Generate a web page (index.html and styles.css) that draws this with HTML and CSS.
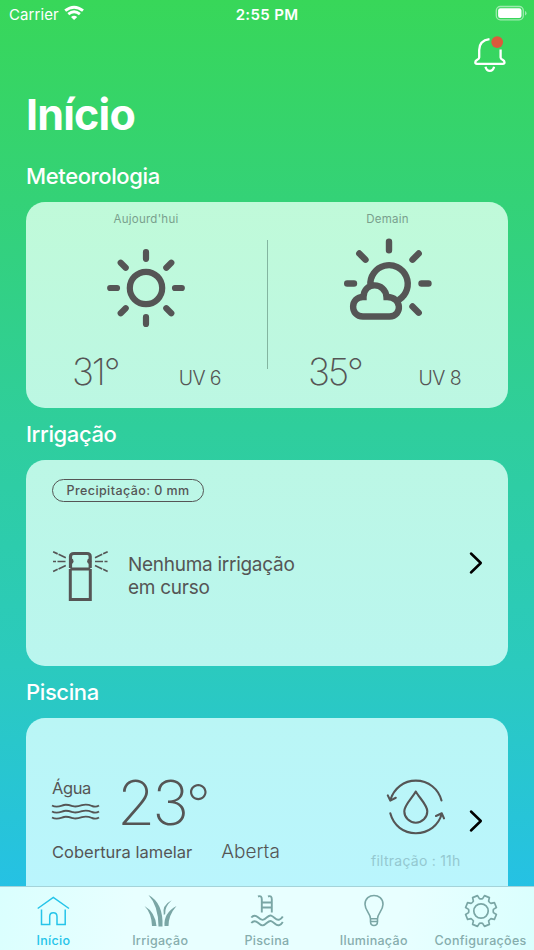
FILE: index.html
```html
<!DOCTYPE html>
<html lang="pt">
<head>
<meta charset="utf-8">
<meta name="viewport" content="width=device-width, initial-scale=1">
<title>Início</title>
<link rel="stylesheet" href="styles.css">
</head>
<body>
<header class="status">
  <div class="carrier"><span>Carrier</span>
    <svg width="20" height="15" viewBox="64 5 20 15" fill="none" stroke="#fff" stroke-width="2.900"><path d="M65.200 10.700Q74.100 3.600 83 10.700M68.300 14.100Q74.100 9.500 79.900 14.100"/><path d="M71 17Q74.100 14.400 77.200 17L74.100 20Z" fill="#fff" stroke="none"/></svg>
  </div>
  <time>2:55 PM</time>
  <svg class="battery" width="32" height="16" viewBox="495 5 32 16"><rect x="496.300" y="6.500" width="27" height="13.300" rx="4" fill="none" stroke="#fff" stroke-opacity=".5" stroke-width="1.300"/><rect x="498.100" y="8.300" width="23.400" height="9.700" rx="2.200" fill="#fff"/><path d="M525 11v4.500q1.500-.6 1.500-2.250T525 11" fill="#fff" fill-opacity=".5"/></svg>
</header>
<div class="toolbar">
  <svg width="36" height="38" viewBox="472 35 36 38" fill="none" stroke="#fff" stroke-width="2.300" stroke-linecap="round" stroke-linejoin="round"><path d="M489.500 39.200C482.500 40.200 479.200 44.500 479.200 50V57.500C479.200 60 475.300 59.700 475.300 62.200Q475.300 63.800 477 63.800H502.800Q504.500 63.800 504.500 62.200C504.500 59.700 500.600 60 500.600 57.500V49.500" stroke-linecap="butt"/><path d="M485.500 66.800Q486.500 70.900 489.800 70.900T494.100 66.800" stroke-linecap="butt"/><circle cx="497.200" cy="42.100" r="5.900" fill="#dc5a3c" stroke="none"/></svg>
</div>
<main>
  <h1>Início</h1>
  <section>
    <h2>Meteorologia</h2>
    <div class="card weather">
      <article class="day">
        <p class="when">Aujourd'hui</p>
        <svg class="sky" width="100" height="96" viewBox="96 236 100 96" fill="none" stroke="#555" stroke-width="6.200" stroke-linecap="round"><circle cx="146" cy="288" r="16.200"/><path d="M146 252v6.800M146 317.200v6.800M110.200 288h6.800M175 288h6.800M120.700 262.700l5 5M171.300 262.700l-5 5M120.700 313.300l5-5M171.300 313.300l-5-5"/></svg>
        <div class="readings"><span class="temp">31°</span><span class="uv">UV 6</span></div>
      </article>
      <div class="divider"></div>
      <article class="day tomorrow">
        <p class="when">Demain</p>
        <svg class="sky" width="100" height="96" viewBox="338 236 100 96" fill="none" stroke="#555" stroke-width="6.400" stroke-linecap="round"><path d="M389 241.800v8.500M359.300 253.500l6.200 6.200M418.700 253.500l-6.200 6.200M347.200 283.500h6.800M421.500 283.500h7M412.500 306.500l6.200 6.200"/><path stroke-linecap="butt" d="M370.400 285.500A18.700 18.700 0 1 1 399 299.700M363 316.500C349.500 316.500 350 296.500 363.500 297C363.500 281.500 385.500 281.500 386.500 297C402.500 296.500 402.500 316.500 389.500 316.500Z"/></svg>
        <div class="readings"><span class="temp">35°</span><span class="uv">UV 8</span></div>
      </article>
    </div>
  </section>
  <section>
    <h2>Irrigação</h2>
    <div class="card irrigation">
      <span class="pill">Precipitação: 0 mm</span>
      <div class="irrigation-row">
        <svg width="58" height="54" viewBox="51 549 58 54" fill="none" stroke="#555"><path stroke-width="3" d="M70.300 569V599.500H90.300V569M70.300 569H90.300"/><path stroke-width="3.200" d="M70.500 568V556.500Q70.500 553.500 74 553.500H87Q90.200 553.500 90.200 556.500V568"/><ellipse cx="71.500" cy="561.300" rx="2" ry="2.700" fill="#555" stroke="none"/><ellipse cx="89.200" cy="561.300" rx="2" ry="2.700" fill="#555" stroke="none"/><path stroke-width="1.700" stroke-dasharray="8 1 5 1" d="M65.800 557.700L53 551.700M65.800 565.500L53 571.500M95 557.700L107.700 551.700M95 565.500L107.700 571.500"/><path stroke-width="1.700" stroke-dasharray="8 1.500 3 1" d="M65.500 561.500H52M95 561.500H108.500"/></svg>
        <p>Nenhuma irrigação<br>em curso</p>
        <svg class="chevron" width="15" height="24" viewBox="469 551 15 24"><path d="M471 553.500l9.800 9.500-9.800 9.500"/></svg>
      </div>
    </div>
  </section>
  <section>
    <h2>Piscina</h2>
    <div class="card pool">
      <div class="pool-info">
        <div class="water-row">
          <div class="water"><span>Água</span>
            <svg width="49" height="19" viewBox="51 803 49 19" fill="none" stroke="#555" stroke-width="1.900"><path id="wave" d="M52 805.500C57 808.300 61 805.700 64 805S70 805.300 73 806.200 79 806.200 82 805.200 88 804.300 92 806Q96 807.500 99 805.500"/><use href="#wave" y="6"/><use href="#wave" y="12"/></svg>
          </div>
          <span class="pool-temp">23<span class="degree">°</span></span>
        </div>
        <div class="cover-row"><span class="cover">Cobertura lamelar</span><span class="state">Aberta</span></div>
      </div>
      <div class="filter">
        <svg width="62" height="60" viewBox="385 777 62 60" fill="none" stroke="#555" stroke-width="2.100" stroke-linecap="round" stroke-linejoin="round"><path d="M390.300 800C394 788 404 780.600 415.800 780.600C428.500 780.600 438.500 789 441.500 800.500M387.800 795.400L390.300 800.600 395.800 797.800M390.300 813.300C393.500 825.500 403.500 833.200 415.800 833.200C428.500 833.200 438.500 825.500 441.800 813.800M436 816L441.800 813.300 444 818.400M415.800 791.500C412.500 797.500 404.300 805 404.300 811.200A11.500 11.500 0 0 0 427.300 811.200C427.300 805 419 797.500 415.800 791.500Z"/></svg>
        <p>filtração : 11h</p>
      </div>
      <svg class="chevron" width="15" height="24" viewBox="469 551 15 24"><path d="M471 553.500l9.800 9.500-9.800 9.500"/></svg>
    </div>
  </section>
</main>
<nav class="tabs">
  <a class="tab active"><svg width="36" height="34" viewBox="35 894 36 34" stroke-width="1.500"><path d="M37.700 908.500L53.300 897.300 69 908.500M41.500 909.500V924.400H49.700V916.500Q49.700 912.800 53.300 912.800T57 916.500V924.400H65.200V909.500"/></svg><span>Início</span></a>
  <a class="tab"><svg width="36" height="34" viewBox="142 894 36 34"><path fill="#7aa6a5" stroke="none" d="M144.500 906Q155 912 156.500 926H152Q151.500 913 144.500 906ZM148.500 895Q163.500 903 162.500 926.500H158.500Q158.500 906 148.500 895ZM171.700 900.300Q164.500 907 165.200 914L163.800 915Q161.500 905.500 171.700 900.300ZM176.500 906Q168.500 915 168.500 926H164.500Q163.500 913 176.500 906Z"/></svg><span>Irrigação</span></a>
  <a class="tab"><svg width="36" height="34" viewBox="248.500 894 36 34" stroke-width="1.900"><path d="M257.500 896.500Q261.300 895 261.300 899.500V912.500M267.500 896.500Q271.300 895 271.300 899.500V912.500M261.300 902.500H271.300M261.300 907.500H271.300"/><path d="M250.800 917.500Q253.800 914 257.500 917.300C261.500 921 263 920.500 266.500 917.300S271.500 915.500 274.500 918.300 280.500 919.500 282.300 916.500M250.800 923Q253.800 919.500 257.500 922.800C261.500 926.500 263 926 266.500 922.800S271.500 921 274.500 923.800 280.500 925 282.300 922"/></svg><span>Piscina</span></a>
  <a class="tab"><svg width="36" height="34" viewBox="355 894 36 34" stroke-width="1.600"><path d="M369.500 918.800C369.500 913.500 364 910.500 364 904.300C364 892.500 382 892.500 382 904.300C382 910.500 376.500 913.500 376.500 918.800ZM369.500 919V921.500Q369.500 925.500 373 925.500T376.500 921.500V919M370 921.500H376"/></svg><span>Iluminação</span></a>
  <a class="tab"><svg width="36" height="34" viewBox="-18 -17 36 34" stroke-width="1.700"><path stroke-linejoin="round" d="M12.400 1.600L15.400 3.500 13.400 8.400 9.900 7.600Q8.500 8.500 7.600 9.900L8.400 13.400 3.500 15.400 1.600 12.400Q0 12 -1.600 12.400L-3.500 15.400 -8.400 13.400 -7.600 9.900Q-8.500 8.500 -9.900 7.600L-13.400 8.400 -15.400 3.500 -12.400 1.600Q-12 0 -12.400 -1.600L-15.400 -3.500 -13.400 -8.400 -9.900 -7.600Q-8.500 -8.500 -7.600 -9.900L-8.400 -13.400 -3.500 -15.400 -1.600 -12.400Q0 -12 1.600 -12.400L3.500 -15.400 8.400 -13.400 7.600 -9.900Q8.500 -8.500 9.900 -7.600L13.400 -8.400 15.400 -3.500 12.400 -1.600Q12 0 12.400 1.600Z"/><circle r="7.200"/></svg><span>Configurações</span></a>
</nav>
</body>
</html>
```
FILE: styles.css
```css
* { box-sizing: border-box; }
body {
  margin: 0;
  height: 950px;
  overflow: hidden;
  font-family: Inter, "Liberation Sans", sans-serif;
  color: #555;
  background: linear-gradient(#38d759 0, #34d277 21%, #2fce9c 45%, #2bcabe 70%, #25c1e5 94%);
}
h1, h2, p { margin: 0; }
svg { display: block; flex: none; }
span, p, h1, h2, time { white-space: nowrap; }
.status {
  height: 28px;
  padding: 0 7px 0 9px;
  display: grid;
  grid-template-columns: 1fr auto 1fr;
  align-items: center;
  color: #fff;
  font-size: 15px;
}
.carrier { display: flex; align-items: center; gap: 5px; letter-spacing: .1px; }
.carrier svg { margin-top: -3px; }
.status time { margin-right: 2px; font-weight: 600; letter-spacing: .35px; }
.battery { justify-self: end; margin-top: -2px; }
.toolbar { height: 50px; padding: 7px 26px 0; display: flex; justify-content: flex-end; }
main { padding: 0 26px; }
h1 { height: 72px; line-height: 72px; font-size: 43px; font-weight: 700; letter-spacing: -.8px; color: #fff; }
h2 { height: 52px; line-height: 52px; font-size: 22px; font-weight: 550; letter-spacing: -.38px; color: #fff; }
.card { height: 206px; border-radius: 19px; overflow: hidden; }
.weather { display: flex; background: linear-gradient(#c0fad9, #bcf7e3); }
.day { width: 240px; display: flex; flex-direction: column; align-items: center; }
.tomorrow { width: 241px; }
.when { height: 34px; line-height: 34px; font-size: 11.500px; letter-spacing: .25px; color: #79a08d; }
.divider { width: 1px; height: 129px; margin: 38px -1px 0 1px; background: #83b5a0; }
.readings { align-self: stretch; display: flex; align-items: baseline; padding: 10px 45px 0 46px; justify-content: space-between; }
.tomorrow .readings { padding-left: 41px; padding-right: 47px; }
.temp { font-size: 37px; font-weight: 160; line-height: 59px; letter-spacing: -2.150px; }
.uv { font-size: 19.500px; font-weight: 300; letter-spacing: -.6px; }
.irrigation { padding: 19px 26px 0; background: linear-gradient(#bcf7e5, #baf6ef); }
.pill { display: block; width: 152px; height: 23px; line-height: 21px; border: 1.500px solid #555; border-radius: 12px; text-align: center; font-size: 12.500px; font-weight: 500; letter-spacing: .42px; }
.irrigation-row { margin: 47px -1px 0; display: flex; align-items: flex-start; }
.irrigation-row p { margin: 4px 0 0 19px; font-size: 19px; line-height: 23px; letter-spacing: -.28px; }
.chevron { margin-left: auto; margin-right: -1px; fill: none; stroke: #000; stroke-width: 2.500; stroke-linecap: round; stroke-linejoin: round; }
.irrigation-row .chevron { margin-top: 2px; }
.pool { display: flex; padding: 0 25px 0 26px; background: linear-gradient(#baf6f5, #baf5ff); }
.pool-info { width: 315px; padding-top: 55px; }
.water-row { display: flex; height: 64px; }
.water { width: 65px; padding-top: 5px; }
.water span { display: block; height: 25px; line-height: 21px; font-size: 16.500px; letter-spacing: -.4px; }
.water svg { margin-left: -1px; }
.pool-temp { line-height: 60px; font-size: 62px; font-weight: 150; letter-spacing: -3px; }
.degree { font-size: 54px; line-height: 0; vertical-align: 2px; }
.cover-row { display: flex; align-items: baseline; gap: 29px; line-height: 29px; }
.cover { font-size: 16.500px; letter-spacing: 0; }
.state { font-size: 19px; font-weight: 300; }
.filter { padding-top: 59px; display: flex; flex-direction: column; align-items: center; margin-left: 5px; }
.filter p { margin: 13px 0 0 -1px; line-height: 22px; font-size: 14px; letter-spacing: .25px; color: #94c8d0; }
.pool .chevron { margin-top: 91px; }
.tabs {
  position: fixed;
  inset: auto 0 0;
  height: 64px;
  display: grid;
  grid-template-columns: repeat(5, 1fr);
  border-top: 1px solid #a4d3d9;
  background: linear-gradient(100deg, #dafffe 0, #e8ffff 25%, #e8ffff 75%, #dafffe 100%);
}
.tab { display: flex; flex-direction: column; align-items: center; padding-top: 7px; color: #86adad; font-size: 12.500px; font-weight: 500; letter-spacing: .3px; }
.tab svg { fill: none; stroke: #7aa6a5; }
.tab span { line-height: 16px; margin-top: 5px; }
.tab.active { color: #25c4e9; }
.tab.active svg { stroke: #25c4e9; }
```
